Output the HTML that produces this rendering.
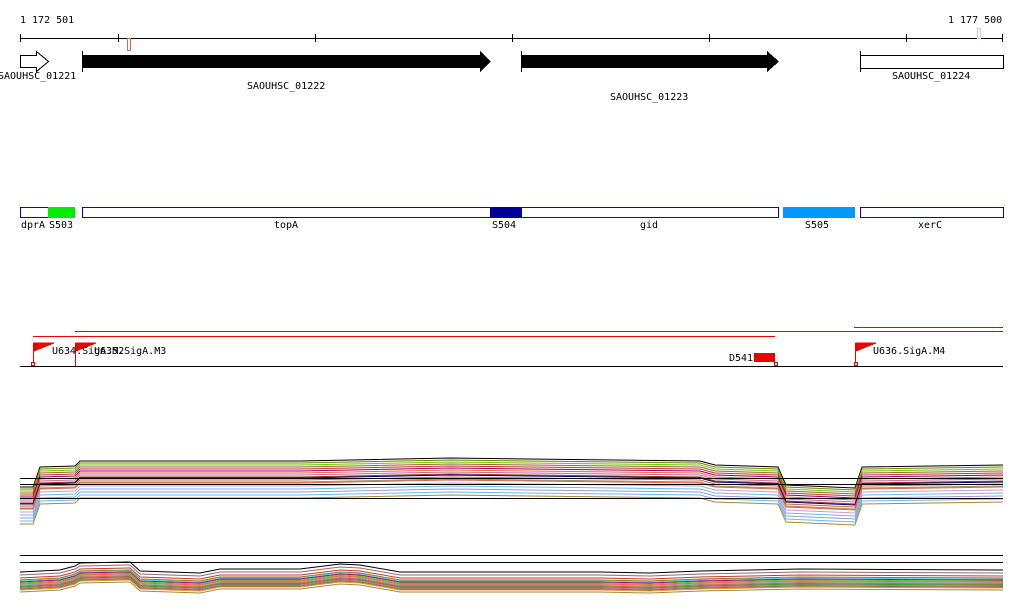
<!DOCTYPE html>
<html><head><meta charset="utf-8"><style>
html,body{margin:0;padding:0;background:#fff;width:1024px;height:611px;overflow:hidden}
svg text{font-family:"DejaVu Sans Mono","Liberation Mono",monospace;font-size:10px;fill:#000}
</style></head><body>
<svg width="1024" height="611" viewBox="0 0 1024 611" xmlns="http://www.w3.org/2000/svg" shape-rendering="crispEdges">
<defs>
<path id="p2" fill="none" d="M20 492 L33 492 L40 472 L75 471 L80 466 L300 466 L450 463 L700 466 L715 470 L778 472 L786 490 L855 493 L862 472 L1003 470"/>
<path id="p3" fill="none" d="M20 578 L60 576 L75 572 L80 569 L130 568 L140 577 L200 579 L220 575 L300 575 L340 570 L360 571 L400 578 L600 578 L650 579 L700 577 L800 575 L1003 576"/>
</defs>
<text x="20" y="23">1 172 501</text>
<text x="948" y="23">1 177 500</text>
<line x1="20" y1="38.5" x2="1003" y2="38.5" stroke="#000"/>
<g stroke="#000">
<line x1="20.5" y1="34" x2="20.5" y2="42"/><line x1="118.5" y1="34" x2="118.5" y2="42"/><line x1="315.5" y1="34" x2="315.5" y2="42"/><line x1="512.5" y1="34" x2="512.5" y2="42"/><line x1="709.5" y1="34" x2="709.5" y2="42"/><line x1="906.5" y1="34" x2="906.5" y2="42"/><line x1="1002.5" y1="34" x2="1002.5" y2="42"/>
</g>
<rect x="127.5" y="38.5" width="3" height="12" fill="none" stroke="#f06040"/>
<rect x="977.5" y="28.5" width="3" height="10" fill="none" stroke="#f8c0b0"/>
<path d="M20.5 55.5 H36.5 V51.5 L48.5 61.5 L36.5 71.5 V67.5 H20.5 Z" fill="#fff" stroke="#000"/>
<text x="-2" y="79">SAOUHSC_01221</text>
<line x1="82.5" y1="51" x2="82.5" y2="72" stroke="#000"/>
<path d="M82 55 H480 V51 L491 61.5 L480 72 V68 H82 Z" fill="#000"/>
<text x="247" y="89">SAOUHSC_01222</text>
<line x1="521.5" y1="51" x2="521.5" y2="72" stroke="#000"/>
<path d="M521 55 H767 V51 L779 61.5 L767 72 V68 H521 Z" fill="#000"/>
<text x="610" y="100">SAOUHSC_01223</text>
<line x1="860.5" y1="51" x2="860.5" y2="72" stroke="#000"/>
<rect x="860.5" y="55.5" width="143" height="13" fill="#fff" stroke="#000"/>
<text x="892" y="79">SAOUHSC_01224</text>
<g stroke="#0000ee" fill="#fff">
<rect x="20.5" y="207.5" width="28" height="10"/>
<rect x="82.5" y="207.5" width="408" height="10"/>
<rect x="521.5" y="207.5" width="257" height="10"/>
<rect x="860.5" y="207.5" width="143" height="10"/>
</g>
<rect x="48" y="207" width="27" height="11" fill="#00ee00"/>
<rect x="490" y="207" width="31" height="11" fill="#000099"/>
<rect x="783" y="207" width="72" height="11" fill="#0099ff"/>
<text x="21" y="228">dprA</text><text x="49" y="228">S503</text>
<text x="274" y="228">topA</text><text x="492" y="228">S504</text>
<text x="640" y="228">gid</text><text x="805" y="228">S505</text>
<text x="918" y="228">xerC</text>
<line x1="854" y1="327.5" x2="1003" y2="327.5" stroke="#ee0000"/>
<line x1="75" y1="331.5" x2="1003" y2="331.5" stroke="#ee0000"/>
<line x1="33" y1="336.5" x2="775" y2="336.5" stroke="#ee0000"/>
<line x1="20" y1="366.5" x2="1003" y2="366.5" stroke="#000"/>
<g stroke="#ee0000" fill="#ee0000">
<line x1="33.5" y1="343" x2="33.5" y2="363"/><path d="M34 343 H54 L34 351 Z"/>
<line x1="75.5" y1="343" x2="75.5" y2="366"/><path d="M76 343 H96 L76 351 Z"/>
<line x1="855.5" y1="343" x2="855.5" y2="363"/><path d="M856 343 H876 L856 351 Z"/>
</g>
<g fill="none" stroke="#ee0000">
<rect x="31.5" y="362.5" width="3" height="3"/><rect x="774.5" y="362.5" width="3" height="3"/><rect x="854.5" y="362.5" width="3" height="3"/>
</g>
<rect x="754" y="353" width="21" height="9" fill="#ee0000"/>
<text x="52" y="354">U634.SigA.M2</text>
<text x="94" y="354">U635.SigA.M3</text>
<text x="729" y="361">D541</text>
<text x="873" y="354">U636.SigA.M4</text>
<g shape-rendering="auto" stroke-width="1">
<use href="#p2" stroke="#000" transform="translate(0,-5)"/>
<use href="#p2" stroke="#808000" transform="translate(0,-3)"/>
<use href="#p2" stroke="#66cc00" transform="translate(0,-1)"/>
<use href="#p2" stroke="#996633" transform="translate(0,1)"/>
<use href="#p2" stroke="#cc3333" transform="translate(0,3)"/>
<use href="#p2" stroke="#990066" transform="translate(0,5)"/>
<use href="#p2" stroke="#ee6633" transform="translate(0,7)"/>
<use href="#p2" stroke="#cc6699" transform="translate(0,9)"/>
<use href="#p2" stroke="#993333" transform="translate(0,11)"/>
<use href="#p2" stroke="#000066" transform="translate(0,12)"/>
<use href="#p2" stroke="#cc6633" transform="translate(0,14)"/>
<use href="#p2" stroke="#aa8866" transform="translate(0,16)"/>
<use href="#p2" stroke="#dd6644" transform="translate(0,17)"/>
<use href="#p2" stroke="#cc99cc" transform="translate(0,20)"/>
<use href="#p2" stroke="#66bbee" transform="translate(0,23)"/>
<use href="#p2" stroke="#9999cc" transform="translate(0,26)"/>
<use href="#p2" stroke="#66bbee" transform="translate(0,29)"/>
<use href="#p2" stroke="#aa8833" transform="translate(0,32)"/>
</g>
<line x1="20" y1="478.5" x2="1003" y2="478.5" stroke="#000"/>
<line x1="20" y1="484.5" x2="1003" y2="484.5" stroke="#000"/>
<line x1="20" y1="498.5" x2="1003" y2="498.5" stroke="#000"/>
<line x1="20" y1="555.5" x2="1003" y2="555.5" stroke="#000"/>
<line x1="20" y1="562.5" x2="1003" y2="562.5" stroke="#000"/>
<g shape-rendering="auto" stroke-width="1">
<use href="#p3" stroke="#000" transform="translate(0,-6)"/>
<use href="#p3" stroke="#996666" transform="translate(0,-3)"/>
<use href="#p3" stroke="#cc3333" transform="translate(0,0)"/>
<use href="#p3" stroke="#808000" transform="translate(0,2)"/>
<use href="#p3" stroke="#66ccff" transform="translate(0,3)"/>
<use href="#p3" stroke="#990099" transform="translate(0,4)"/>
<use href="#p3" stroke="#66cc00" transform="translate(0,5)"/>
<use href="#p3" stroke="#ee6633" transform="translate(0,6)"/>
<use href="#p3" stroke="#9999cc" transform="translate(0,7)"/>
<use href="#p3" stroke="#cc6633" transform="translate(0,8)"/>
<use href="#p3" stroke="#339933" transform="translate(0,9)"/>
<use href="#p3" stroke="#cc6699" transform="translate(0,10)"/>
<use href="#p3" stroke="#996633" transform="translate(0,11)"/>
<use href="#p3" stroke="#cc9933" transform="translate(0,12)"/>
<use href="#p3" stroke="#aa8833" transform="translate(0,14)"/>
</g>
</svg>
</body></html>
